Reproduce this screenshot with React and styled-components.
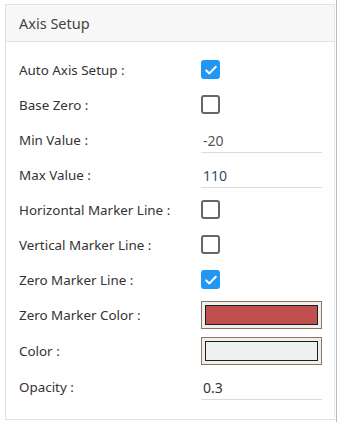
import React, { useState } from "react";
import styled, { createGlobalStyle } from "styled-components";

const GlobalStyle = createGlobalStyle`
  body {
    margin: 0;
    background: #ffffff;
    font-family: "Noto Sans", "Open Sans", sans-serif;
  }
`;

const Page = styled.div`
  width: 337px;
  height: 422px;
  box-sizing: border-box;
  padding: 4px 1px 0 5px;
  border-right: 1px solid #b9bcbf;
  overflow: hidden;
`;

const Panel = styled.div`
  border: 1px solid #dde3e8;
  border-right-color: #e6eaee;
  background: #ffffff;
`;

const Header = styled.div`
  height: 36px;
  display: flex;
  align-items: center;
  padding-left: 13px;
  background: #f7f7f7;
  border-bottom: 1px solid #dde3e8;
  font-size: 14.5px;
  color: #444;
`;

const Body = styled.div`
  padding: 10px 0 15px 13px;
`;

const Row = styled.div`
  display: grid;
  grid-template-columns: 182px 121px;
  align-items: center;
  height: ${(p) => (p.tall ? "36px" : "35px")};
  font-size: 13.4px;
  color: #333;
`;

const Label = styled.span`
  white-space: nowrap;
`;

const Box = styled.span`
  width: 19px;
  height: 19px;
  box-sizing: border-box;
  border-radius: 3px;
  display: flex;
  align-items: center;
  justify-content: center;
  background: ${(p) => (p.checked ? "#2196f3" : "#fff")};
  border: ${(p) => (p.checked ? "none" : "2px solid #666")};
  cursor: pointer;
`;

const Input = styled.input`
  width: 121px;
  height: 26px;
  box-sizing: border-box;
  border: none;
  border-bottom: 1px solid #dcdcdc;
  padding: 2px 0 0 2px;
  font: inherit;
  font-size: 14px;
  color: ${(p) => p.tone || "#444"};
  outline: none;
  background: transparent;
`;

const Swatch = styled.div`
  width: 121px;
  height: 28px;
  box-sizing: border-box;
  border: 1px solid #8c7461;
  background: #efefef;
  padding: 3px;
`;

const SwatchFill = styled.div`
  height: 100%;
  box-sizing: border-box;
  border: 1.5px solid #1e1e1e;
  background: ${(p) => p.color};
`;

const Check = ({ checked, onClick }) => (
  <Box checked={checked} onClick={onClick}>
    {checked && (
      <svg width="14" height="14" viewBox="0 0 14 14">
        <path
          d="M2.2 7.4 L5.4 10.4 L11.8 3.8"
          fill="none"
          stroke="#fff"
          strokeWidth="2"
          strokeLinecap="round"
          strokeLinejoin="round"
        />
      </svg>
    )}
  </Box>
);

export default function App() {
  const [flags, setFlags] = useState({
    auto: true,
    base: false,
    hMarker: false,
    vMarker: false,
    zero: true,
  });
  const toggle = (k) => () => setFlags((f) => ({ ...f, [k]: !f[k] }));

  return (
    <>
      <GlobalStyle />
      <Page>
        <Panel>
          <Header>Axis Setup</Header>
          <Body>
            <Row>
              <Label>Auto Axis Setup :</Label>
              <Check checked={flags.auto} onClick={toggle("auto")} />
            </Row>
            <Row>
              <Label>Base Zero :</Label>
              <Check checked={flags.base} onClick={toggle("base")} />
            </Row>
            <Row>
              <Label>Min Value :</Label>
              <Input defaultValue="-20" tone="#555" />
            </Row>
            <Row>
              <Label>Max Value :</Label>
              <Input defaultValue="110" tone="#3b4a72" />
            </Row>
            <Row>
              <Label>Horizontal Marker Line :</Label>
              <Check checked={flags.hMarker} onClick={toggle("hMarker")} />
            </Row>
            <Row>
              <Label>Vertical Marker Line :</Label>
              <Check checked={flags.vMarker} onClick={toggle("vMarker")} />
            </Row>
            <Row>
              <Label>Zero Marker Line :</Label>
              <Check checked={flags.zero} onClick={toggle("zero")} />
            </Row>
            <Row tall>
              <Label>Zero Marker Color :</Label>
              <Swatch>
                <SwatchFill color="#c0504d" />
              </Swatch>
            </Row>
            <Row tall>
              <Label>Color :</Label>
              <Swatch>
                <SwatchFill color="#eff0f0" />
              </Swatch>
            </Row>
            <Row>
              <Label>Opacity :</Label>
              <Input defaultValue="0.3" tone="#333" />
            </Row>
          </Body>
        </Panel>
      </Page>
    </>
  );
}
